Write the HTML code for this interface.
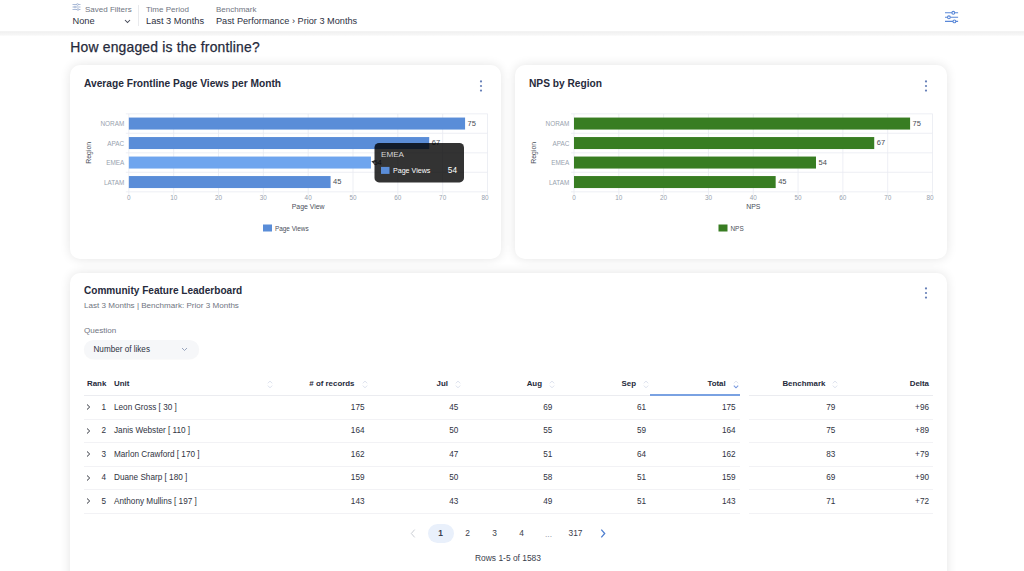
<!DOCTYPE html><html><head><meta charset="utf-8"><title>Dashboard</title><style>
*{box-sizing:border-box;margin:0;padding:0}
html,body{width:1024px;height:571px;overflow:hidden;background:#fff;font-family:"Liberation Sans",sans-serif;color:#2d3142}
.abs{position:absolute;white-space:nowrap}
#hdr{position:absolute;left:0;top:0;width:1024px;height:31px;background:#fff}
#hsh{position:absolute;left:0;top:30.5px;width:1024px;height:5.7px;background:linear-gradient(#f6f6f6 0%,#f0f0f0 18%,#f4f4f4 50%,#f7f7f7 85%,#fff 100%)}
.lbl{font-size:8px;color:#70757f;line-height:10px}
.val{font-size:9.25px;color:#2d3142;line-height:12px}
.card{position:absolute;background:#fff;border-radius:10px;box-shadow:0 0 11px rgba(0,0,0,.11)}
.ttl{font-size:10.2px;font-weight:700;color:#262a3b;line-height:12px}
.sub{font-size:8.07px;color:#70757f;line-height:10px}
.ch{position:absolute;left:0;top:0}
.tk{font-size:6.4px;fill:#98a2ae}
.vl{font-size:7.5px;fill:#4a4d55}
.ax{font-size:6.9px;fill:#4a4f5a}
.lg{font-size:6.4px;fill:#4a4f5a}
.th{font-size:7.9px;font-weight:700;color:#262a3b;line-height:10px}
.td{font-size:8.2px;color:#2f3342;line-height:10px}
.r{text-align:right}
.hb{position:absolute;height:1px;background:#ebecf0}
.rb{position:absolute;height:1px;background:#f2f2f5}
.pg{font-size:8.4px;color:#3a3e4c;line-height:10px;text-align:center;width:20px}
</style></head><body>
<div id="hsh"></div><div id="hdr">
<svg class="abs" style="left:72px;top:2.8px" width="9" height="8" viewBox="0 0 9 8"><g stroke="#8aa0c8" stroke-width="0.7" fill="none"><path d="M0.5 1.5H8.5M0.5 4H8.5M0.5 6.5H8.5"/></g><g fill="#fff" stroke="#8aa0c8" stroke-width="0.6"><circle cx="5.5" cy="1.5" r="0.9"/><circle cx="3" cy="4" r="0.9"/><circle cx="6" cy="6.5" r="0.9"/></g></svg>
<div class="abs lbl" style="left:85px;top:4.7px">Saved Filters</div>
<div class="abs val" style="left:72.5px;top:14.8px">None</div>
<svg class="abs" style="left:123.5px;top:18.6px" width="7" height="5" viewBox="0 0 7 5"><path d="M1 1L3.5 3.5L6 1" fill="none" stroke="#444956" stroke-width="1.05"/></svg>
<div class="abs" style="left:137.9px;top:4.5px;width:1px;height:21.5px;background:#e9eaed"></div>
<div class="abs lbl" style="left:146px;top:4.7px">Time Period</div>
<div class="abs val" style="left:146px;top:14.8px">Last 3 Months</div>
<div class="abs lbl" style="left:216px;top:4.7px">Benchmark</div>
<div class="abs val" style="left:216px;top:14.8px;font-size:9.18px">Past Performance › Prior 3 Months</div>
<svg class="abs" style="left:944px;top:10px" width="16" height="14" viewBox="0 0 16 14"><g stroke="#5a88d8" stroke-width="1.1" fill="none"><path d="M1 2.8H14.1M1 7.3H14.1M1 11.4H14.1"/></g><g fill="#fff" stroke="#5a88d8" stroke-width="1.1"><circle cx="9.3" cy="2.8" r="1.4"/><circle cx="4.9" cy="7.3" r="1.4"/><circle cx="10.4" cy="11.4" r="1.4"/></g></svg>
</div>
<div class="abs" style="left:70.3px;top:38.6px;font-size:13.9px;letter-spacing:0.2px;font-weight:400;color:#262a3b;line-height:17px;-webkit-text-stroke:0.25px #262a3b">How engaged is the frontline?</div>
<div class="card" style="left:70px;top:65px;width:431px;height:193.5px">
<svg class="ch" width="431" height="193" viewBox="0 0 431 193"><line x1="58.85" y1="48.8" x2="58.85" y2="129.8" stroke="#e8ebf1" stroke-width="0.8"/><line x1="103.68" y1="48.8" x2="103.68" y2="129.8" stroke="#e8ebf1" stroke-width="0.8"/><line x1="148.51" y1="48.8" x2="148.51" y2="129.8" stroke="#e8ebf1" stroke-width="0.8"/><line x1="193.34" y1="48.8" x2="193.34" y2="129.8" stroke="#e8ebf1" stroke-width="0.8"/><line x1="238.17" y1="48.8" x2="238.17" y2="129.8" stroke="#e8ebf1" stroke-width="0.8"/><line x1="283.01" y1="48.8" x2="283.01" y2="129.8" stroke="#e8ebf1" stroke-width="0.8"/><line x1="327.84" y1="48.8" x2="327.84" y2="129.8" stroke="#e8ebf1" stroke-width="0.8"/><line x1="372.67" y1="48.8" x2="372.67" y2="129.8" stroke="#e8ebf1" stroke-width="0.8"/><line x1="417.50" y1="48.8" x2="417.50" y2="129.8" stroke="#e8ebf1" stroke-width="0.8"/><line x1="55.849999999999994" y1="48.80" x2="417.5" y2="48.80" stroke="#e8ebf1" stroke-width="0.8"/><line x1="55.849999999999994" y1="68.30" x2="417.5" y2="68.30" stroke="#e8ebf1" stroke-width="0.8"/><line x1="55.849999999999994" y1="87.80" x2="417.5" y2="87.80" stroke="#e8ebf1" stroke-width="0.8"/><line x1="55.849999999999994" y1="107.30" x2="417.5" y2="107.30" stroke="#e8ebf1" stroke-width="0.8"/><line x1="55.849999999999994" y1="126.80" x2="417.5" y2="126.80" stroke="#e8ebf1" stroke-width="0.8"/><rect x="58.849999999999994" y="52.55" width="336.23" height="12" fill="#5a8dd8"/><text x="54.24999999999999" y="61.35" text-anchor="end" class="tk">NORAM</text><text x="397.58" y="60.75" class="vl">75</text><rect x="58.849999999999994" y="72.05" width="300.37" height="12" fill="#5a8dd8"/><text x="54.24999999999999" y="80.85" text-anchor="end" class="tk">APAC</text><text x="361.72" y="80.25" class="vl">67</text><rect x="58.849999999999994" y="91.55" width="242.09" height="12" fill="#6fa5ee"/><text x="54.24999999999999" y="100.35" text-anchor="end" class="tk">EMEA</text><text x="303.44" y="99.75" class="vl">54</text><rect x="58.849999999999994" y="111.05" width="201.74" height="12" fill="#5a8dd8"/><text x="54.24999999999999" y="119.85" text-anchor="end" class="tk">LATAM</text><text x="263.09" y="119.25" class="vl">45</text><text x="58.85" y="135.0" text-anchor="middle" class="tk">0</text><text x="103.68" y="135.0" text-anchor="middle" class="tk">10</text><text x="148.51" y="135.0" text-anchor="middle" class="tk">20</text><text x="193.34" y="135.0" text-anchor="middle" class="tk">30</text><text x="238.17" y="135.0" text-anchor="middle" class="tk">40</text><text x="283.01" y="135.0" text-anchor="middle" class="tk">50</text><text x="327.84" y="135.0" text-anchor="middle" class="tk">60</text><text x="372.67" y="135.0" text-anchor="middle" class="tk">70</text><text x="418.50" y="135.0" text-anchor="end" class="tk">80</text><text x="238.18" y="143.9" text-anchor="middle" class="ax">Page View</text><text transform="translate(20.900000000000006,87.80000000000001) rotate(-90)" text-anchor="middle" class="ax">Region</text><rect x="193" y="159.5" width="9" height="7" fill="#5a8dd8"/><text x="205" y="165.5" class="lg">Page Views</text><path d="M304.5 96.80000000000001 L301.3 97.5 L304.5 100.69999999999999Z" fill="rgba(0,0,0,0.8)" transform="translate(0,-1.2)"/><rect x="304.5" y="77.9" width="89.5" height="39.5" rx="4.5" fill="rgba(0,0,0,0.8)"/><text x="311.0" y="91.9" style="font-size:8.1px;fill:#d6d6d6">EMEA</text><rect x="311.0" y="101.9" width="8.5" height="7" fill="#5a8dd8"/><text x="323.0" y="108.2" style="font-size:7.1px;fill:#fff">Page Views</text><text x="387.0" y="108.10000000000001" text-anchor="end" style="font-size:8.3px;fill:#fff">54</text></svg>
<div class="abs ttl" style="left:14px;top:13.1px">Average Frontline Page Views per Month</div>
<svg class="abs" style="left:409px;top:15.299999999999997px" width="4" height="12" viewBox="0 0 4 12"><circle cx="2" cy="1.45" r="1.1" fill="#6780b8"/><circle cx="2" cy="6" r="1.1" fill="#6780b8"/><circle cx="2" cy="10.55" r="1.1" fill="#6780b8"/></svg>
</div>
<div class="card" style="left:515px;top:65px;width:432.3px;height:193.5px">
<svg class="ch" width="432" height="193" viewBox="0 0 432 193"><line x1="59.00" y1="48.8" x2="59.00" y2="129.8" stroke="#e8ebf1" stroke-width="0.8"/><line x1="103.81" y1="48.8" x2="103.81" y2="129.8" stroke="#e8ebf1" stroke-width="0.8"/><line x1="148.62" y1="48.8" x2="148.62" y2="129.8" stroke="#e8ebf1" stroke-width="0.8"/><line x1="193.44" y1="48.8" x2="193.44" y2="129.8" stroke="#e8ebf1" stroke-width="0.8"/><line x1="238.25" y1="48.8" x2="238.25" y2="129.8" stroke="#e8ebf1" stroke-width="0.8"/><line x1="283.06" y1="48.8" x2="283.06" y2="129.8" stroke="#e8ebf1" stroke-width="0.8"/><line x1="327.88" y1="48.8" x2="327.88" y2="129.8" stroke="#e8ebf1" stroke-width="0.8"/><line x1="372.69" y1="48.8" x2="372.69" y2="129.8" stroke="#e8ebf1" stroke-width="0.8"/><line x1="417.50" y1="48.8" x2="417.50" y2="129.8" stroke="#e8ebf1" stroke-width="0.8"/><line x1="56.0" y1="48.80" x2="417.5" y2="48.80" stroke="#e8ebf1" stroke-width="0.8"/><line x1="56.0" y1="68.30" x2="417.5" y2="68.30" stroke="#e8ebf1" stroke-width="0.8"/><line x1="56.0" y1="87.80" x2="417.5" y2="87.80" stroke="#e8ebf1" stroke-width="0.8"/><line x1="56.0" y1="107.30" x2="417.5" y2="107.30" stroke="#e8ebf1" stroke-width="0.8"/><line x1="56.0" y1="126.80" x2="417.5" y2="126.80" stroke="#e8ebf1" stroke-width="0.8"/><rect x="59.0" y="52.55" width="336.09" height="12" fill="#387d22"/><text x="54.4" y="61.35" text-anchor="end" class="tk">NORAM</text><text x="397.59" y="60.75" class="vl">75</text><rect x="59.0" y="72.05" width="300.24" height="12" fill="#387d22"/><text x="54.4" y="80.85" text-anchor="end" class="tk">APAC</text><text x="361.74" y="80.25" class="vl">67</text><rect x="59.0" y="91.55" width="241.99" height="12" fill="#387d22"/><text x="54.4" y="100.35" text-anchor="end" class="tk">EMEA</text><text x="303.49" y="99.75" class="vl">54</text><rect x="59.0" y="111.05" width="201.66" height="12" fill="#387d22"/><text x="54.4" y="119.85" text-anchor="end" class="tk">LATAM</text><text x="263.16" y="119.25" class="vl">45</text><text x="59.00" y="135.0" text-anchor="middle" class="tk">0</text><text x="103.81" y="135.0" text-anchor="middle" class="tk">10</text><text x="148.62" y="135.0" text-anchor="middle" class="tk">20</text><text x="193.44" y="135.0" text-anchor="middle" class="tk">30</text><text x="238.25" y="135.0" text-anchor="middle" class="tk">40</text><text x="283.06" y="135.0" text-anchor="middle" class="tk">50</text><text x="327.88" y="135.0" text-anchor="middle" class="tk">60</text><text x="372.69" y="135.0" text-anchor="middle" class="tk">70</text><text x="418.50" y="135.0" text-anchor="end" class="tk">80</text><text x="238.25" y="143.9" text-anchor="middle" class="ax">NPS</text><text transform="translate(20.5,87.80000000000001) rotate(-90)" text-anchor="middle" class="ax">Region</text><rect x="203.5" y="159.5" width="9" height="7" fill="#387d22"/><text x="215.5" y="165.5" class="lg">NPS</text></svg>
<div class="abs ttl" style="left:14px;top:13.1px">NPS by Region</div>
<svg class="abs" style="left:409.4px;top:15.299999999999997px" width="4" height="12" viewBox="0 0 4 12"><circle cx="2" cy="1.45" r="1.1" fill="#6780b8"/><circle cx="2" cy="6" r="1.1" fill="#6780b8"/><circle cx="2" cy="10.55" r="1.1" fill="#6780b8"/></svg>
</div>
<div class="card" style="left:70px;top:273px;width:877.3px;height:330px">
<div class="abs ttl" style="left:14px;top:12.300000000000011px;font-size:10.07px">Community Feature Leaderboard</div>
<div class="abs sub" style="left:14px;top:28.19999999999999px">Last 3 Months | Benchmark: Prior 3 Months</div>
<svg class="abs" style="left:854.4px;top:14.300000000000011px" width="4" height="12" viewBox="0 0 4 12"><circle cx="2" cy="1.45" r="1.1" fill="#6780b8"/><circle cx="2" cy="6" r="1.1" fill="#6780b8"/><circle cx="2" cy="10.55" r="1.1" fill="#6780b8"/></svg>
<div class="abs sub" style="left:14px;top:53.30000000000001px">Question</div>
<div class="abs" style="left:13.5px;top:67.39999999999998px;width:115.5px;height:18.7px;border-radius:10px;background:#f6f7f9;box-shadow:0 0.5px 1px rgba(0,0,0,.04)"></div>
<div class="abs" style="left:23.5px;top:71.5px;font-size:8.13px;line-height:10px;color:#2d3142">Number of likes</div>
<svg class="abs" style="left:111px;top:74px" width="7" height="5" viewBox="0 0 7 5"><path d="M1 1L3.5 3.5L6 1" fill="none" stroke="#8896b4" stroke-width="0.85"/></svg>
<div class="abs th" style="left:17px;top:106.30000000000001px">Rank</div>
<div class="abs th" style="left:44px;top:106.30000000000001px">Unit</div>
<svg class="abs" style="left:196.5px;top:106.80000000000001px" width="6" height="9" viewBox="0 0 6 9"><path d="M0.8 3.3 L3 1.1 L5.2 3.3" fill="none" stroke="#d3d9e8" stroke-width="0.8"/><path d="M0.8 5.6 L3 7.8 L5.2 5.6" fill="none" stroke="#d3d9e8" stroke-width="0.8"/></svg>
<div class="abs th r" style="left:184.5px;width:100px;top:106.30000000000001px"># of records</div>
<svg class="abs" style="left:291.5px;top:106.80000000000001px" width="6" height="9" viewBox="0 0 6 9"><path d="M0.8 3.3 L3 1.1 L5.2 3.3" fill="none" stroke="#d3d9e8" stroke-width="0.8"/><path d="M0.8 5.6 L3 7.8 L5.2 5.6" fill="none" stroke="#d3d9e8" stroke-width="0.8"/></svg>
<div class="abs th r" style="left:278px;width:100px;top:106.30000000000001px">Jul</div>
<svg class="abs" style="left:384.5px;top:106.80000000000001px" width="6" height="9" viewBox="0 0 6 9"><path d="M0.8 3.3 L3 1.1 L5.2 3.3" fill="none" stroke="#d3d9e8" stroke-width="0.8"/><path d="M0.8 5.6 L3 7.8 L5.2 5.6" fill="none" stroke="#d3d9e8" stroke-width="0.8"/></svg>
<div class="abs th r" style="left:372px;width:100px;top:106.30000000000001px">Aug</div>
<svg class="abs" style="left:478.5px;top:106.80000000000001px" width="6" height="9" viewBox="0 0 6 9"><path d="M0.8 3.3 L3 1.1 L5.2 3.3" fill="none" stroke="#d3d9e8" stroke-width="0.8"/><path d="M0.8 5.6 L3 7.8 L5.2 5.6" fill="none" stroke="#d3d9e8" stroke-width="0.8"/></svg>
<div class="abs th r" style="left:466px;width:100px;top:106.30000000000001px">Sep</div>
<svg class="abs" style="left:572.5px;top:106.80000000000001px" width="6" height="9" viewBox="0 0 6 9"><path d="M0.8 3.3 L3 1.1 L5.2 3.3" fill="none" stroke="#d3d9e8" stroke-width="0.8"/><path d="M0.8 5.6 L3 7.8 L5.2 5.6" fill="none" stroke="#d3d9e8" stroke-width="0.8"/></svg>
<div class="abs th r" style="left:555.7px;width:100px;top:106.30000000000001px">Total</div>
<svg class="abs" style="left:662.5px;top:106.80000000000001px" width="6" height="9" viewBox="0 0 6 9"><path d="M0.8 3.3 L3 1.1 L5.2 3.3" fill="none" stroke="#d3d9e8" stroke-width="0.8"/><path d="M0.8 5.6 L3 7.8 L5.2 5.6" fill="none" stroke="#7b9be0" stroke-width="1.15"/></svg>
<div class="abs th r" style="left:655.4px;width:100px;top:106.30000000000001px">Benchmark</div>
<svg class="abs" style="left:762.3px;top:106.80000000000001px" width="6" height="9" viewBox="0 0 6 9"><path d="M0.8 3.3 L3 1.1 L5.2 3.3" fill="none" stroke="#d3d9e8" stroke-width="0.8"/><path d="M0.8 5.6 L3 7.8 L5.2 5.6" fill="none" stroke="#d3d9e8" stroke-width="0.8"/></svg>
<div class="abs th r" style="left:759px;width:100px;top:106.30000000000001px">Delta</div>
<div class="hb" style="left:14px;top:122px;width:656px"></div>
<div class="hb" style="left:679px;top:122px;width:184px"></div>
<div class="abs" style="left:580px;top:121.19999999999999px;width:90px;height:1.5px;background:#7aa2e2"></div>
<svg class="abs" style="left:15.5px;top:131.39999999999998px" width="5" height="6" viewBox="0 0 5 6"><path d="M1 0.5L3.7 3L1 5.5" fill="none" stroke="#33363f" stroke-width="1"/></svg>
<div class="abs td" style="left:31.5px;top:129.60000000000002px">1</div>
<div class="abs td" style="left:44px;top:129.60000000000002px">Leon Gross [ 30 ]</div>
<div class="abs td r" style="left:234.5px;width:60px;top:129.60000000000002px">175</div>
<div class="abs td r" style="left:328.4px;width:60px;top:129.60000000000002px">45</div>
<div class="abs td r" style="left:422.29999999999995px;width:60px;top:129.60000000000002px">69</div>
<div class="abs td r" style="left:516px;width:60px;top:129.60000000000002px">61</div>
<div class="abs td r" style="left:605.7px;width:60px;top:129.60000000000002px">175</div>
<div class="abs td r" style="left:705.3px;width:60px;top:129.60000000000002px">79</div>
<div class="abs td r" style="left:799px;width:60px;top:129.60000000000002px">+96</div>
<div class="rb" style="left:14px;top:145.60000000000002px;width:656px"></div>
<div class="rb" style="left:679px;top:145.60000000000002px;width:184px"></div>
<svg class="abs" style="left:15.5px;top:154.89999999999998px" width="5" height="6" viewBox="0 0 5 6"><path d="M1 0.5L3.7 3L1 5.5" fill="none" stroke="#33363f" stroke-width="1"/></svg>
<div class="abs td" style="left:31.5px;top:153.10000000000002px">2</div>
<div class="abs td" style="left:44px;top:153.10000000000002px">Janis Webster [ 110 ]</div>
<div class="abs td r" style="left:234.5px;width:60px;top:153.10000000000002px">164</div>
<div class="abs td r" style="left:328.4px;width:60px;top:153.10000000000002px">50</div>
<div class="abs td r" style="left:422.29999999999995px;width:60px;top:153.10000000000002px">55</div>
<div class="abs td r" style="left:516px;width:60px;top:153.10000000000002px">59</div>
<div class="abs td r" style="left:605.7px;width:60px;top:153.10000000000002px">164</div>
<div class="abs td r" style="left:705.3px;width:60px;top:153.10000000000002px">75</div>
<div class="abs td r" style="left:799px;width:60px;top:153.10000000000002px">+89</div>
<div class="rb" style="left:14px;top:169.10000000000002px;width:656px"></div>
<div class="rb" style="left:679px;top:169.10000000000002px;width:184px"></div>
<svg class="abs" style="left:15.5px;top:178.39999999999998px" width="5" height="6" viewBox="0 0 5 6"><path d="M1 0.5L3.7 3L1 5.5" fill="none" stroke="#33363f" stroke-width="1"/></svg>
<div class="abs td" style="left:31.5px;top:176.60000000000002px">3</div>
<div class="abs td" style="left:44px;top:176.60000000000002px">Marlon Crawford [ 170 ]</div>
<div class="abs td r" style="left:234.5px;width:60px;top:176.60000000000002px">162</div>
<div class="abs td r" style="left:328.4px;width:60px;top:176.60000000000002px">47</div>
<div class="abs td r" style="left:422.29999999999995px;width:60px;top:176.60000000000002px">51</div>
<div class="abs td r" style="left:516px;width:60px;top:176.60000000000002px">64</div>
<div class="abs td r" style="left:605.7px;width:60px;top:176.60000000000002px">162</div>
<div class="abs td r" style="left:705.3px;width:60px;top:176.60000000000002px">83</div>
<div class="abs td r" style="left:799px;width:60px;top:176.60000000000002px">+79</div>
<div class="rb" style="left:14px;top:192.60000000000002px;width:656px"></div>
<div class="rb" style="left:679px;top:192.60000000000002px;width:184px"></div>
<svg class="abs" style="left:15.5px;top:201.89999999999998px" width="5" height="6" viewBox="0 0 5 6"><path d="M1 0.5L3.7 3L1 5.5" fill="none" stroke="#33363f" stroke-width="1"/></svg>
<div class="abs td" style="left:31.5px;top:200.10000000000002px">4</div>
<div class="abs td" style="left:44px;top:200.10000000000002px">Duane Sharp [ 180 ]</div>
<div class="abs td r" style="left:234.5px;width:60px;top:200.10000000000002px">159</div>
<div class="abs td r" style="left:328.4px;width:60px;top:200.10000000000002px">50</div>
<div class="abs td r" style="left:422.29999999999995px;width:60px;top:200.10000000000002px">58</div>
<div class="abs td r" style="left:516px;width:60px;top:200.10000000000002px">51</div>
<div class="abs td r" style="left:605.7px;width:60px;top:200.10000000000002px">159</div>
<div class="abs td r" style="left:705.3px;width:60px;top:200.10000000000002px">69</div>
<div class="abs td r" style="left:799px;width:60px;top:200.10000000000002px">+90</div>
<div class="rb" style="left:14px;top:216.10000000000002px;width:656px"></div>
<div class="rb" style="left:679px;top:216.10000000000002px;width:184px"></div>
<svg class="abs" style="left:15.5px;top:225.39999999999998px" width="5" height="6" viewBox="0 0 5 6"><path d="M1 0.5L3.7 3L1 5.5" fill="none" stroke="#33363f" stroke-width="1"/></svg>
<div class="abs td" style="left:31.5px;top:223.60000000000002px">5</div>
<div class="abs td" style="left:44px;top:223.60000000000002px">Anthony Mullins [ 197 ]</div>
<div class="abs td r" style="left:234.5px;width:60px;top:223.60000000000002px">143</div>
<div class="abs td r" style="left:328.4px;width:60px;top:223.60000000000002px">43</div>
<div class="abs td r" style="left:422.29999999999995px;width:60px;top:223.60000000000002px">49</div>
<div class="abs td r" style="left:516px;width:60px;top:223.60000000000002px">51</div>
<div class="abs td r" style="left:605.7px;width:60px;top:223.60000000000002px">143</div>
<div class="abs td r" style="left:705.3px;width:60px;top:223.60000000000002px">71</div>
<div class="abs td r" style="left:799px;width:60px;top:223.60000000000002px">+72</div>
<div class="rb" style="left:14px;top:239.60000000000002px;width:656px"></div>
<div class="rb" style="left:679px;top:239.60000000000002px;width:184px"></div>
<svg class="abs" style="left:340px;top:255.89999999999998px" width="6" height="9" viewBox="0 0 6 9"><path d="M4.7 0.6L1.3 4.5L4.7 8.4" fill="none" stroke="#c9ccd3" stroke-width="1"/></svg>
<div class="abs" style="left:358px;top:251px;width:25.5px;height:18.5px;border-radius:9.5px;background:#e9f0fb"></div>
<div class="abs pg" style="left:360.7px;top:254.79999999999995px;font-weight:700;color:#3a3e4c">1</div>
<div class="abs pg" style="left:387.5px;top:254.79999999999995px;font-weight:400;color:#3a3e4c">2</div>
<div class="abs pg" style="left:414.5px;top:254.79999999999995px;font-weight:400;color:#3a3e4c">3</div>
<div class="abs pg" style="left:441.5px;top:254.79999999999995px;font-weight:400;color:#3a3e4c">4</div>
<div class="abs pg" style="left:468.5px;top:255.59999999999997px;font-weight:400;color:#9aa0ab">...</div>
<div class="abs pg" style="left:495.5px;top:254.79999999999995px;font-weight:400;color:#3a3e4c">317</div>
<svg class="abs" style="left:530px;top:256.0px" width="6" height="9" viewBox="0 0 6 9"><path d="M1.3 0.6L4.7 4.5L1.3 8.4" fill="none" stroke="#4f7fd0" stroke-width="1.3"/></svg>
<div class="abs" style="left:388px;width:100px;text-align:center;top:280px;font-size:8.42px;line-height:10px;color:#3a3e4c">Rows 1-5 of 1583</div>
</div>
</body></html>
